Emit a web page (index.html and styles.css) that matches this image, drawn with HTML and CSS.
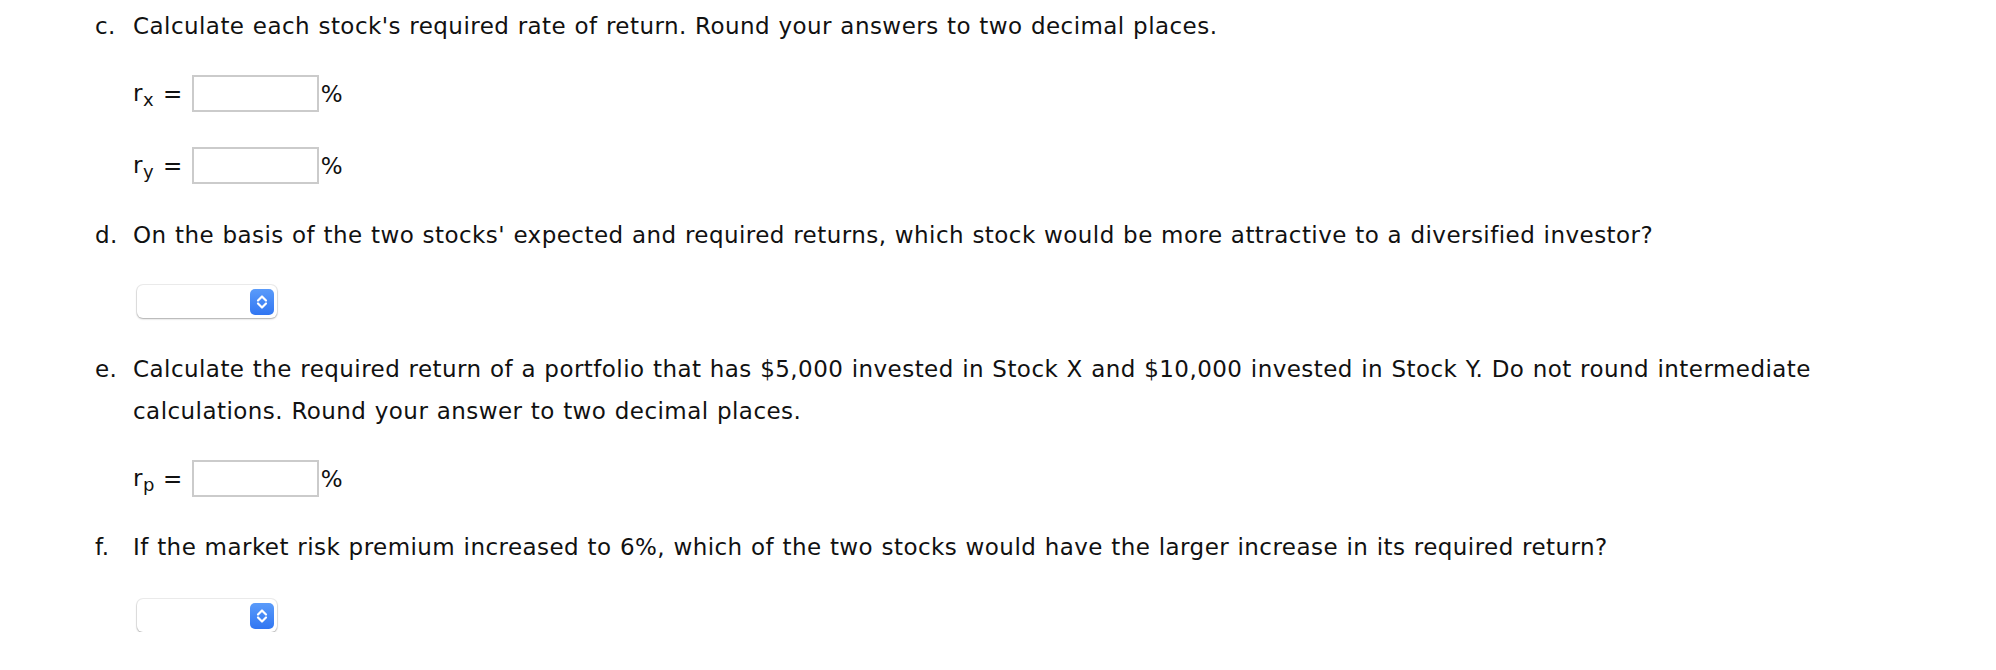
FILE: index.html
```html
<!DOCTYPE html>
<html lang="en">
<head>
<meta charset="utf-8">
<title>Required returns</title>
<link rel="stylesheet" href="styles.css">
</head>
<body>
<main class="sheet">
  <section class="q q-c">
    <div class="q-head"><span class="q-letter">c.</span><p class="q-text">Calculate each stock's required rate of return. Round your answers to two decimal places.</p></div>
    <div class="answer-row row-first"><span class="var">r<sub>x</sub></span><span class="eq">=</span><input class="answer" type="text" aria-label="r x"><span class="pct">%</span></div>
    <div class="answer-row row-second"><span class="var">r<sub>y</sub></span><span class="eq">=</span><input class="answer" type="text" aria-label="r y"><span class="pct">%</span></div>
  </section>
  <section class="q q-d">
    <div class="q-head"><span class="q-letter">d.</span><p class="q-text">On the basis of the two stocks' expected and required returns, which stock would be more attractive to a diversified investor?</p></div>
    <div class="select" role="combobox" aria-label="choice"><span class="select-btn"><svg width="12" height="18" viewBox="0 0 12 18"><path d="M2 7.5 L6 3.5 L10 7.5" fill="none" stroke="#fff" stroke-width="2.2" stroke-linecap="round" stroke-linejoin="round"/><path d="M2 10.5 L6 14.5 L10 10.5" fill="none" stroke="#fff" stroke-width="2.2" stroke-linecap="round" stroke-linejoin="round"/></svg></span></div>
  </section>
  <section class="q q-e">
    <div class="q-head"><span class="q-letter">e.</span><p class="q-text">Calculate the required return of a portfolio that has $5,000 invested in Stock X and $10,000 invested in Stock Y. Do not round intermediate calculations. Round your answer to two decimal places.</p></div>
    <div class="answer-row row-first"><span class="var">r<sub>p</sub></span><span class="eq">=</span><input class="answer" type="text" aria-label="r p"><span class="pct">%</span></div>
  </section>
  <section class="q q-f">
    <div class="q-head"><span class="q-letter">f.</span><p class="q-text">If the market risk premium increased to 6%, which of the two stocks would have the larger increase in its required return?</p></div>
    <div class="select" role="combobox" aria-label="choice"><span class="select-btn"><svg width="12" height="18" viewBox="0 0 12 18"><path d="M2 7.5 L6 3.5 L10 7.5" fill="none" stroke="#fff" stroke-width="2.2" stroke-linecap="round" stroke-linejoin="round"/><path d="M2 10.5 L6 14.5 L10 10.5" fill="none" stroke="#fff" stroke-width="2.2" stroke-linecap="round" stroke-linejoin="round"/></svg></span></div>
  </section>
</main>
</body>
</html>
```
FILE: styles.css
```css
html, body {
  margin: 0;
  padding: 0;
  background: #fff;
}
body {
  font-family: "DejaVu Sans", Verdana, sans-serif;
  font-size: 23px;
  letter-spacing: 0.45px;
  word-spacing: 0.6px;
  color: #111;
}
.sheet {
  padding: 5px 0 0 95px;
  width: 1790px;
}
.q-head {
  display: flex;
  line-height: 42px;
}
.q-letter {
  flex: 0 0 38px;
}
.q-text {
  margin: 0;
  flex: 1;
}
.answer-row {
  display: flex;
  align-items: center;
  padding-left: 38px;
  height: 37px;
}
.row-first {
  margin-top: 28px;
}
.row-second {
  margin-top: 35px;
}
.var {
  flex: 0 0 30px;
  line-height: 1;
}
.var sub {
  font-size: 18px;
  line-height: 0;
  vertical-align: -5px;
}
.eq {
  margin-right: 9px;
}
.answer {
  box-sizing: border-box;
  width: 127px;
  height: 37px;
  border: 2px solid #cbcbcb;
  border-radius: 0;
  padding: 0 6px;
  margin: 0;
  font: inherit;
  background: #fff;
  outline: none;
}
.pct {
  margin-left: 2px;
}
.q-d {
  margin-top: 30px;
}
.q-e {
  margin-top: 30px;
}
.q-f {
  margin-top: 29px;
}
.select {
  box-sizing: border-box;
  margin: 29px 0 0 42px;
  width: 140px;
  height: 33px;
  border-radius: 6px;
  background: #fff;
  box-shadow: 0 0 0 1px rgba(0, 0, 0, 0.07), 0 1px 2px rgba(0, 0, 0, 0.28);
  display: flex;
  align-items: center;
  justify-content: flex-end;
  padding-right: 3px;
}
.q-f .select {
  margin-top: 31px;
}
.select-btn {
  width: 24px;
  height: 26px;
  border-radius: 5px;
  background: linear-gradient(#5a9bfa, #3176f2);
  display: flex;
  align-items: center;
  justify-content: center;
}
.select-btn svg {
  display: block;
}
```
